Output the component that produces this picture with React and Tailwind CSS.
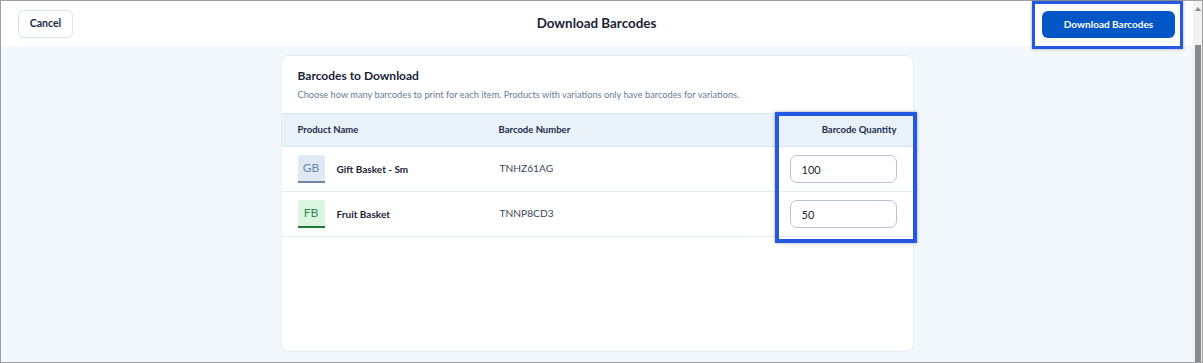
const rows = [
  { initials: "GB", name: "Gift Basket - Sm", code: "TNHZ61AG", qty: "100", tone: "blue" },
  { initials: "FB", name: "Fruit Basket", code: "TNNP8CD3", qty: "50", tone: "green" },
];

function Avatar({ initials, tone }) {
  const cls =
    tone === "green"
      ? "bg-[#daf5e1] text-[#2f8a47] border-[#1e7a36]"
      : "bg-[#dfe9f4] text-[#6c84a2] border-[#6f86a4]";
  return (
    <div className={`flex h-[28px] w-[27px] items-center justify-center rounded-t-[3px] border-b-2 text-[12px] ${cls}`}>
      {initials}
    </div>
  );
}

export default function App() {
  return (
    <div
      className="flex h-[363px] w-[1203px] border border-[#a0a0a0] text-[#1b2336]"
      style={{ fontFamily: "Lato, 'Open Sans', sans-serif" }}
    >
      <div className="flex min-w-0 flex-1 flex-col">
        <header className="flex h-[45px] shrink-0 items-center bg-white pl-[17px] pr-[18px]">
          <div className="flex flex-1">
            <button className="h-[28px] w-[55px] rounded-[6px] border border-[#dbe5f0] bg-white text-[10.5px] font-bold text-[#1b2a4a]">
              Cancel
            </button>
          </div>
          <h1 className="text-[13.4px] font-bold text-[#1b2336]">Download Barcodes</h1>
          <div className="flex flex-1 justify-end">
            <div className="relative">
              <button className="h-[27px] w-[133px] rounded-[6px] bg-[#0256c6] text-[10px] font-bold text-white">
                Download Barcodes
              </button>
              <div className="pointer-events-none absolute -bottom-[11px] -left-[10px] -right-[8px] -top-[9px] border-[3px] border-[#2458e2] shadow-[0_0_3px_rgba(0,0,0,0.35)]" />
            </div>
          </div>
        </header>

        <main className="flex flex-1 flex-col bg-[#f3f8fc] pb-[10px] pt-[9px]">
          <section className="relative mx-auto flex w-[633px] flex-1 flex-col rounded-[8px] border border-[#e6edf4] bg-white">
            <div className="px-[16px] pt-[13px]">
              <h2 className="text-[12px] font-bold leading-[14px] text-[#1b2336]">Barcodes to Download</h2>
              <p className="mt-[6px] text-[9.25px] leading-[12px] text-[#6a7d96]">
                Choose how many barcodes to print for each item. Products with variations only have barcodes for variations.
              </p>
            </div>

            <div className="mt-[12px] grid h-[34px] grid-cols-[201px_1fr_140px] items-center border-y border-[#dae4ef] bg-[#e9f1f9] px-[16px] text-[9.5px] font-bold text-[#1b2a4a]">
              <span>Product Name</span>
              <span>Barcode Number</span>
              <span className="text-right">Barcode Quantity</span>
            </div>

            {rows.map((r) => (
              <div
                key={r.code}
                className="grid h-[45px] grid-cols-[201px_1fr_140px] items-center border-b border-[#e3ebf3] px-[16px]"
              >
                <div className="flex items-center gap-[12px]">
                  <Avatar initials={r.initials} tone={r.tone} />
                  <span className="text-[10px] font-bold text-[#1b2336]">{r.name}</span>
                </div>
                <span className="pl-[1px] text-[10.2px] text-[#3b4658]">{r.code}</span>
                <div className="flex justify-end">
                  <input
                    readOnly
                    value={r.qty}
                    className="h-[28px] w-[107px] rounded-[7px] border border-[#b7c4d8] bg-white px-[11px] text-[11px] text-[#1b2336] outline-none"
                  />
                </div>
              </div>
            ))}

            <div className="pointer-events-none absolute left-[493px] top-[56px] h-[131px] w-[142px] border-[4px] border-[#2458e2] shadow-[0_0_3px_rgba(0,0,0,0.35)]" />
          </section>
        </main>
      </div>

      <div className="flex w-[9px] shrink-0 flex-col items-center bg-[#f1f1f1]">
        <div className="mt-[6px] h-0 w-0 border-x-[3px] border-b-[4px] border-x-transparent border-b-[#8a8a8a]" />
        <div className="mt-[34px] w-[6px] flex-1 bg-[#8a8a8a]" />
      </div>
    </div>
  );
}
